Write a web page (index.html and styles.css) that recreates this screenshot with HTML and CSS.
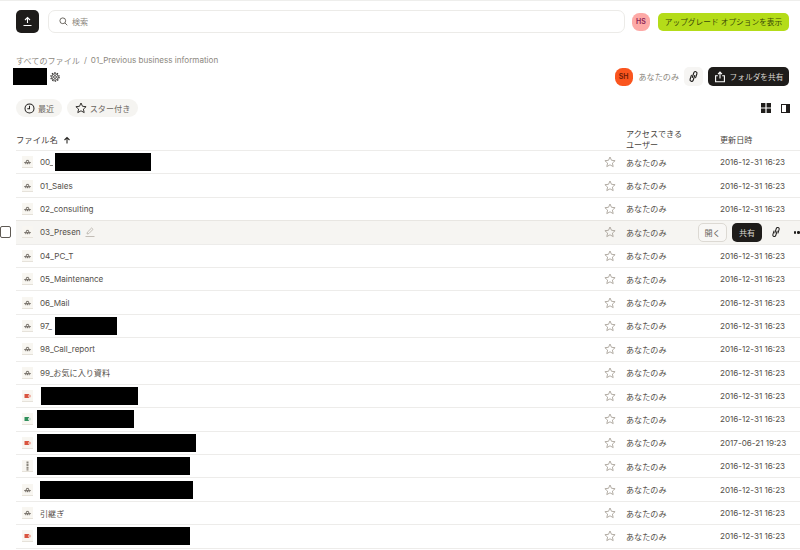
FILE: index.html
```html
<!DOCTYPE html>
<html lang="ja">
<head>
<meta charset="utf-8">
<title>01_Previous business information</title>
<link rel="stylesheet" href="styles.css">
</head>
<body>
<svg class="defs" width="0" height="0">
  <symbol id="star" viewBox="0 0 12 12"><path d="M6 1l1.5 3.3 3.6.4-2.7 2.4.8 3.5L6 8.8l-3.2 1.8.8-3.5L.9 4.7l3.6-.4z" fill="none" stroke="currentColor" stroke-width=".9" stroke-linejoin="round"/></symbol>
  <symbol id="link" viewBox="0 0 12 12"><g transform="rotate(18 6 6)" fill="none" stroke="currentColor" stroke-width="1" stroke-linecap="round"><path d="M5.2 7.2V2.6a1.5 1.5 0 0 1 3 0V6.4"/><path d="M6.8 4.8V9.4a1.5 1.5 0 0 1-3 0V5.6"/></g></symbol>
  <symbol id="thumb-folder" viewBox="0 0 11 12"><rect width="11" height="12" fill="#f8f6f1"/><path d="M0 11.5h11" stroke="#e6e2da"/><path d="M2.2 6.6h6.6M4 6.4L4.6 4.4h1.8L7 6.4M3.8 6.8v1.4M5.5 6.8v1.4M7.2 6.8v1.4" stroke="#77716a" stroke-width="1" fill="none"/></symbol>
  <symbol id="thumb-red" viewBox="0 0 11 12"><rect width="11" height="12" fill="#f8f6f1"/><path d="M0 11.5h11" stroke="#e6e2da"/><rect x="2.5" y="4" width="4.5" height="4" fill="#d9543f"/><circle cx="7.5" cy="6" r="1.6" fill="#eeb0a4"/></symbol>
  <symbol id="thumb-green" viewBox="0 0 11 12"><rect width="11" height="12" fill="#f8f6f1"/><path d="M0 11.5h11" stroke="#e6e2da"/><rect x="2.5" y="4" width="4.5" height="4" fill="#2f8f5b"/><circle cx="7.5" cy="6" r="1.6" fill="#cfe3d6"/></symbol>
  <symbol id="thumb-tall" viewBox="0 0 11 12"><rect width="11" height="12" fill="#f8f6f1"/><path d="M0 11.5h11" stroke="#e6e2da"/><path d="M5.5 1.5v9" stroke="#8a857c" stroke-width="2" stroke-dasharray="2 .6"/></symbol>
</svg>

<header class="topbar">
  <button class="upload" type="button" aria-label="アップロード">
    <svg width="11" height="11" viewBox="0 0 11 11"><path d="M5.5 7V1.8M3 4l2.5-2.5L8 4M1.5 9.5h8" fill="none" stroke="#fff" stroke-width="1.1"/></svg>
  </button>
  <div class="search">
    <svg width="9" height="9" viewBox="0 0 10 10"><circle cx="4.2" cy="4.2" r="3.2" fill="none" stroke="#5f5a54" stroke-width="1"/><path d="M6.6 6.6L9.2 9.2" stroke="#5f5a54" stroke-width="1"/></svg>
    <span>検索</span>
  </div>
  <div class="avatar avatar-hs">HS</div>
  <button class="upgrade" type="button">アップグレード オプションを表示</button>
</header>

<section class="folder-head">
  <div class="folder-left">
    <nav class="crumbs"><span>すべてのファイル</span><span class="sep">/</span><span>01_Previous business information</span></nav>
    <div class="title-row">
      <span class="mask mask-title"></span>
      <svg width="10" height="10" viewBox="0 0 12 12"><circle cx="6" cy="6" r="1.7" fill="none" stroke="#2a2825" stroke-width="1"/><circle cx="6" cy="6" r="3.9" fill="none" stroke="#2a2825" stroke-width="1"/><circle cx="6" cy="6" r="5" fill="none" stroke="#2a2825" stroke-width="1.3" stroke-dasharray="1.7 1.45"/></svg>
    </div>
  </div>
  <div class="folder-right">
    <div class="avatar avatar-sh">SH</div>
    <span class="only">あなたのみ</span>
    <button class="icon-btn" type="button" aria-label="リンク"><svg width="13" height="13"><use href="#link"/></svg></button>
    <button class="share-btn" type="button">
      <svg width="12" height="12" viewBox="0 0 12 12"><path d="M6 7.5V1.2M4 3.1l2-2 2 2M3.8 4.8H1.6v6h8.8v-6H8.2" fill="none" stroke="#fff" stroke-width="1.1"/></svg>
      フォルダを共有
    </button>
  </div>
</section>

<section class="filters">
  <div class="chips">
    <span class="chip"><svg width="11" height="11" viewBox="0 0 12 12"><circle cx="6" cy="6" r="4.9" fill="none" stroke="#1f1d1b" stroke-width="1.1"/><path d="M6 3v3.3H3.6" fill="none" stroke="#1f1d1b" stroke-width="1.1"/></svg>最近</span>
    <span class="chip chip-star"><svg width="12" height="12" class="ink"><use href="#star"/></svg>スター付き</span>
  </div>
  <div class="views">
    <svg width="10" height="10" viewBox="0 0 10 10"><path d="M0 0h4.4v4.4H0zM5.6 0H10v4.4H5.6zM0 5.6h4.4V10H0zM5.6 5.6H10V10H5.6z" fill="#1f1d1b"/></svg>
    <svg width="9" height="9" viewBox="0 0 9 9"><rect x=".5" y=".5" width="8" height="8" fill="none" stroke="#1f1d1b"/><rect x="5" y="0" width="4" height="9" fill="#1f1d1b"/></svg>
  </div>
</section>

<main class="table">
  <div class="row head">
    <div class="c-name">ファイル名<svg class="sort" width="8" height="8" viewBox="0 0 8 8"><path d="M4 7.5V1.5M1.5 4L4 1.5 6.5 4" fill="none" stroke="#2a2825" stroke-width="1.1"/></svg></div>
    <div class="c-star"></div>
    <div class="c-access">アクセスできる<br>ユーザー</div>
    <div class="c-date">更新日時</div>
  </div>

  <div class="row"><div class="c-name"><svg class="thumb"><use href="#thumb-folder"/></svg>00_<span class="mask m-00"></span></div><svg class="c-star"><use href="#star"/></svg><div class="c-access">あなたのみ</div><div class="c-date">2016-12-31 16:23</div></div>
  <div class="row"><div class="c-name"><svg class="thumb"><use href="#thumb-folder"/></svg>01_Sales</div><svg class="c-star"><use href="#star"/></svg><div class="c-access">あなたのみ</div><div class="c-date">2016-12-31 16:23</div></div>
  <div class="row"><div class="c-name"><svg class="thumb"><use href="#thumb-folder"/></svg>02_consulting</div><svg class="c-star"><use href="#star"/></svg><div class="c-access">あなたのみ</div><div class="c-date">2016-12-31 16:23</div></div>
  <div class="row row-hover">
    <span class="check"></span>
    <div class="c-name"><svg class="thumb"><use href="#thumb-folder"/></svg>03_Presen<svg class="pencil" width="10" height="10" viewBox="0 0 10 10"><path d="M2 7l.4-1.8L6.6 1l1.4 1.4L3.8 6.6zM.5 9.5h9" fill="none" stroke="#b5afa6" stroke-width=".8"/></svg></div>
    <svg class="c-star"><use href="#star"/></svg>
    <div class="c-access">あなたのみ</div>
    <div class="actions">
      <button class="open" type="button">開く</button>
      <button class="share-small" type="button">共有</button>
      <svg class="act-link" width="12" height="12"><use href="#link"/></svg>
      <span class="dots"><i></i><i></i><i></i></span>
    </div>
  </div>
  <div class="row"><div class="c-name"><svg class="thumb"><use href="#thumb-folder"/></svg>04_PC_T</div><svg class="c-star"><use href="#star"/></svg><div class="c-access">あなたのみ</div><div class="c-date">2016-12-31 16:23</div></div>
  <div class="row"><div class="c-name"><svg class="thumb"><use href="#thumb-folder"/></svg>05_Maintenance</div><svg class="c-star"><use href="#star"/></svg><div class="c-access">あなたのみ</div><div class="c-date">2016-12-31 16:23</div></div>
  <div class="row"><div class="c-name"><svg class="thumb"><use href="#thumb-folder"/></svg>06_Mail</div><svg class="c-star"><use href="#star"/></svg><div class="c-access">あなたのみ</div><div class="c-date">2016-12-31 16:23</div></div>
  <div class="row"><div class="c-name"><svg class="thumb"><use href="#thumb-folder"/></svg>97_<span class="mask m-97"></span></div><svg class="c-star"><use href="#star"/></svg><div class="c-access">あなたのみ</div><div class="c-date">2016-12-31 16:23</div></div>
  <div class="row"><div class="c-name"><svg class="thumb"><use href="#thumb-folder"/></svg>98_Call_report</div><svg class="c-star"><use href="#star"/></svg><div class="c-access">あなたのみ</div><div class="c-date">2016-12-31 16:23</div></div>
  <div class="row"><div class="c-name"><svg class="thumb"><use href="#thumb-folder"/></svg>99_お気に入り資料</div><svg class="c-star"><use href="#star"/></svg><div class="c-access">あなたのみ</div><div class="c-date">2016-12-31 16:23</div></div>
  <div class="row"><div class="c-name"><svg class="thumb"><use href="#thumb-red"/></svg><span class="mask m-a"></span></div><svg class="c-star"><use href="#star"/></svg><div class="c-access">あなたのみ</div><div class="c-date">2016-12-31 16:23</div></div>
  <div class="row"><div class="c-name"><svg class="thumb"><use href="#thumb-green"/></svg><span class="mask m-b"></span></div><svg class="c-star"><use href="#star"/></svg><div class="c-access">あなたのみ</div><div class="c-date">2016-12-31 16:23</div></div>
  <div class="row"><div class="c-name"><svg class="thumb"><use href="#thumb-red"/></svg><span class="mask m-c"></span></div><svg class="c-star"><use href="#star"/></svg><div class="c-access">あなたのみ</div><div class="c-date">2017-06-21 19:23</div></div>
  <div class="row"><div class="c-name"><svg class="thumb"><use href="#thumb-tall"/></svg><span class="mask m-d"></span></div><svg class="c-star"><use href="#star"/></svg><div class="c-access">あなたのみ</div><div class="c-date">2016-12-31 16:23</div></div>
  <div class="row"><div class="c-name"><svg class="thumb"><use href="#thumb-folder"/></svg><span class="mask m-e"></span></div><svg class="c-star"><use href="#star"/></svg><div class="c-access">あなたのみ</div><div class="c-date">2016-12-31 16:23</div></div>
  <div class="row"><div class="c-name"><svg class="thumb"><use href="#thumb-folder"/></svg>引継ぎ</div><svg class="c-star"><use href="#star"/></svg><div class="c-access">あなたのみ</div><div class="c-date">2016-12-31 16:23</div></div>
  <div class="row"><div class="c-name"><svg class="thumb"><use href="#thumb-red"/></svg><span class="mask m-d"></span></div><svg class="c-star"><use href="#star"/></svg><div class="c-access">あなたのみ</div><div class="c-date">2016-12-31 16:23</div></div>
</main>
</body>
</html>
```

FILE: styles.css
```css
* { box-sizing: border-box; }

html, body {
  margin: 0;
  height: 550px;
  overflow: hidden;
  background: #fff;
}

body {
  font-family: "Inter", "Noto Sans CJK JP", sans-serif;
  font-size: 8.1px;
  color: #55504a;
  border-top: 1px solid #eeeeec;
}

button {
  font: inherit;
  border: 0;
  padding: 0;
}

.defs { position: absolute; }

.topbar {
  display: flex;
  align-items: center;
  height: 41px;
  padding: 0 11px 0 16px;
}

.upload {
  width: 23px;
  height: 23px;
  border-radius: 5px;
  background: #1e1c1a;
  display: flex;
  align-items: center;
  justify-content: center;
}

.search {
  flex: 1;
  height: 23px;
  margin-left: 9px;
  padding-left: 10px;
  display: flex;
  align-items: center;
  gap: 4px;
  border: 1px solid #ecebe8;
  border-radius: 7px;
  color: #8d8880;
}

.avatar {
  width: 18px;
  height: 18px;
  border-radius: 7.5px;
  display: flex;
  align-items: center;
  justify-content: center;
  font-size: 7px;
  font-weight: 600;
}

.avatar-hs {
  margin-left: 7px;
  background: #fda9a6;
  color: #8a1f55;
}

.upgrade {
  margin-left: 8px;
  width: 131px;
  height: 18px;
  border-radius: 5px;
  background: #b4dc19;
  color: #3a4a08;
  font-size: 7.7px;
}

.folder-head {
  display: flex;
  justify-content: space-between;
  align-items: flex-end;
  height: 44px;
  padding: 0 11px 0 13px;
}

.crumbs {
  display: flex;
  gap: 4px;
  padding-left: 3px;
  height: 12px;
  align-items: center;
  color: #8d8880;
  margin-bottom: 2px;
}

.title-row {
  display: flex;
  align-items: center;
  gap: 3px;
  margin-bottom: 1px;
}

.mask {
  display: block;
  flex: none;
  background: #000;
  height: 18px;
  box-shadow: 0 0 0 2px #fff;
}

.mask-title {
  width: 34px;
  height: 17px;
  box-shadow: none;
}

.folder-right {
  display: flex;
  align-items: center;
  height: 19px;
}

.avatar-sh {
  background: #fa551e;
  color: #6b1a05;
}

.only {
  margin-left: 6px;
  color: #8d8880;
}

.icon-btn {
  width: 19px;
  height: 19px;
  margin-left: 5px;
  border-radius: 5px;
  background: #f6f5f3;
  color: #1e1c1a;
  display: flex;
  align-items: center;
  justify-content: center;
}

.share-btn {
  width: 81px;
  height: 19px;
  margin-left: 5px;
  border-radius: 5px;
  background: #1e1c1a;
  color: #d8d5cf;
  display: flex;
  align-items: center;
  justify-content: center;
  gap: 4px;
  font-size: 7.7px;
}

.filters {
  display: flex;
  justify-content: space-between;
  align-items: center;
  height: 18px;
  margin-top: 13px;
  padding: 0 10px 0 16px;
}

.chips {
  display: flex;
  gap: 5px;
}

.chip {
  height: 18px;
  width: 46px;
  border-radius: 9px;
  background: #f5f4f1;
  display: flex;
  align-items: center;
  justify-content: center;
  gap: 3px;
  color: #6b665f;
}

.chip-star { width: 71px; }

.ink { color: #1f1d1b; }

.views {
  display: flex;
  align-items: center;
  gap: 10px;
}

.table {
  margin-top: 12px;
  padding-left: 16px;
  width: 820px;
}

.row {
  position: relative;
  display: grid;
  grid-template-columns: 588px 22px 94px 100px;
  align-items: center;
  height: 23.4px;
  border-bottom: 1px solid #edecea;
  color: #55504a;
}

.row.head {
  height: 22px;
  line-height: 11px;
  color: #45413c;
}

.row.head .c-name { font-size: 8.4px; }

.row-hover {
  background: #f6f5f2;
  border-top: 1px solid #e8e6e2;
  margin-top: -1px;
  height: 24.4px;
  grid-template-columns: 588px 22px 94px 1fr;
}

.c-name {
  display: flex;
  align-items: center;
  min-width: 0;
  white-space: nowrap;
}

.row:not(.head) .c-name { padding-left: 6px; }

.thumb {
  width: 11px;
  height: 12px;
  margin-right: 7px;
  flex: none;
}

.c-star {
  width: 12px;
  height: 12px;
  color: #aaa49b;
}

.c-date { white-space: nowrap; }

.sort { margin-left: 5px; }

.m-00 { width: 96px; margin-left: 1px; }
.m-97 { width: 62px; margin-left: 3px; }
.m-a { width: 97px; margin-left: 1px; }
.m-b { width: 97px; margin-left: -3px; }
.m-c { width: 159px; margin-left: -3px; }
.m-d { width: 153px; margin-left: -3px; }
.m-e { width: 153px; }

.check {
  position: absolute;
  left: -16px;
  top: 5px;
  width: 11px;
  height: 12px;
  border: 1px solid #5f5a54;
  border-radius: 2px;
  background: #fff;
}

.pencil { margin-left: 4px; }

.actions {
  display: flex;
  align-items: center;
  margin-left: -22px;
  white-space: nowrap;
}

.open {
  width: 29px;
  height: 19px;
  border: 1px solid #dcd9d3;
  border-radius: 5px;
  background: #f8f7f5;
  color: #6b665f;
}

.share-small {
  width: 30px;
  height: 19px;
  margin-left: 5px;
  border-radius: 5px;
  background: #1e1c1a;
  color: #d8d5cf;
}

.act-link {
  margin-left: 8px;
  color: #1e1c1a;
}

.dots {
  display: flex;
  gap: 1px;
  margin-left: 12px;
}

.dots i {
  display: block;
  flex: none;
  width: 2.4px;
  height: 2.4px;
  border-radius: 50%;
  background: #1e1c1a;
}
```
